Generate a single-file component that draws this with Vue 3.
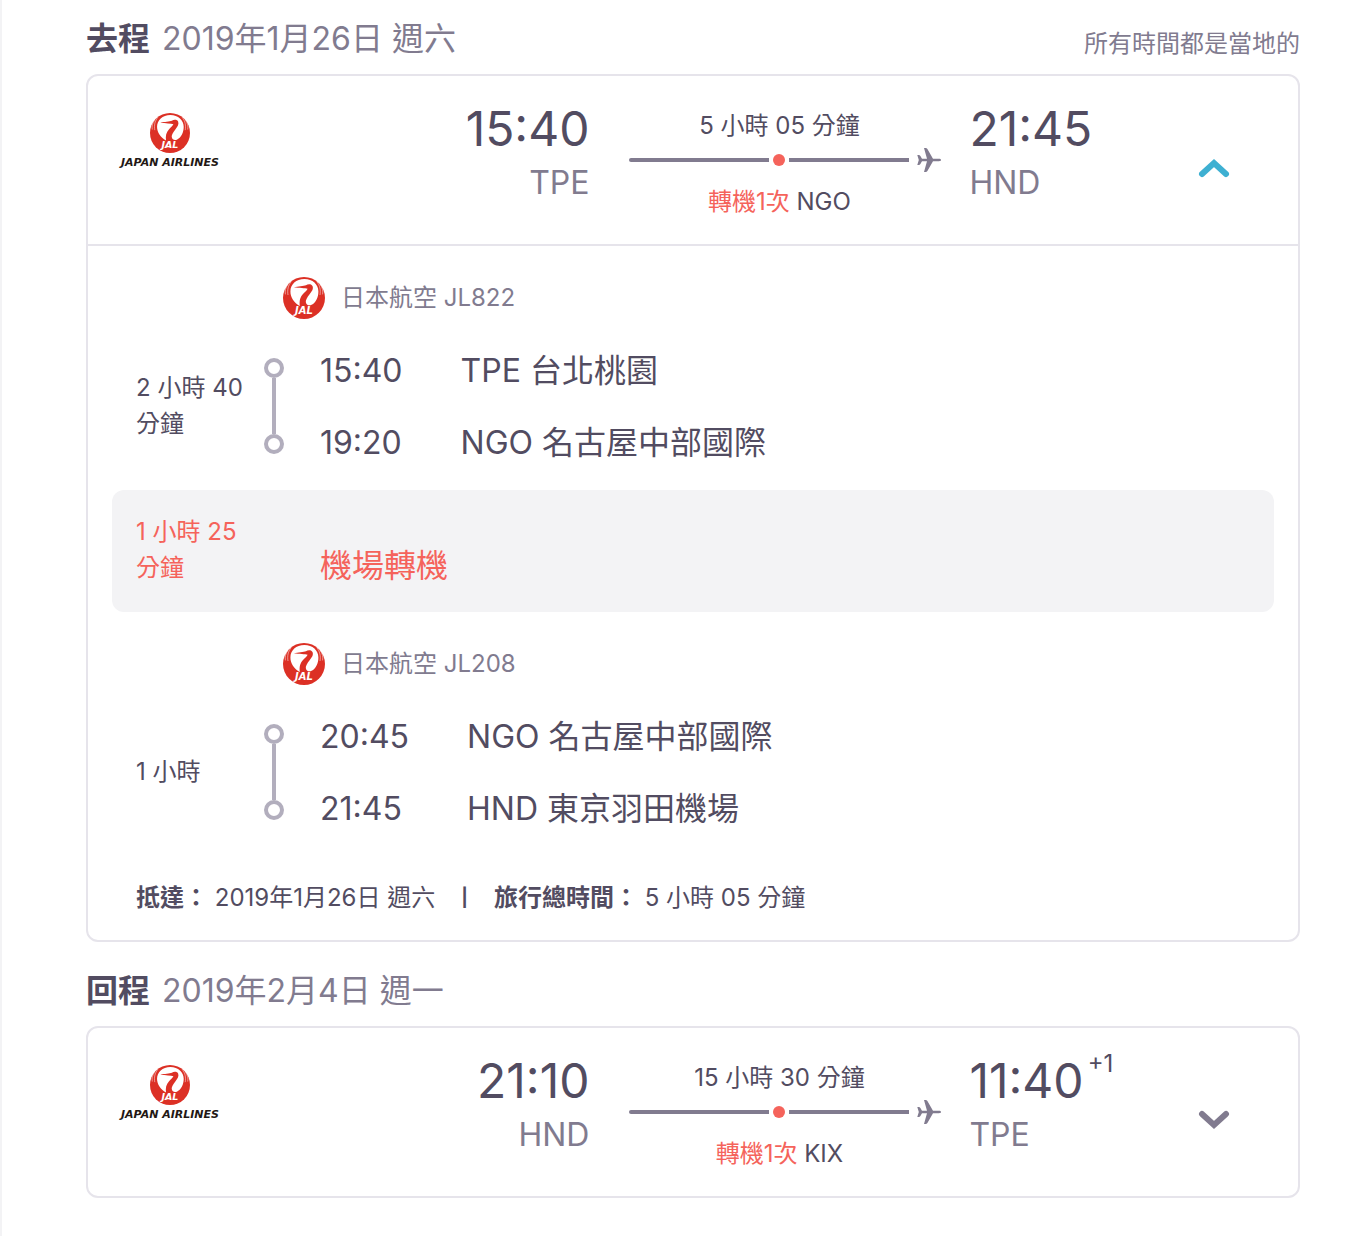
<template>
  <main class="itinerary">
    <svg class="sprite" aria-hidden="true">
      <symbol id="jal-crane" viewBox="0 0 42 42">
        <circle cx="21" cy="21" r="21" fill="#dc3025" />
        <path
          d="M21.4 2C13 2 7.4 7.4 7.4 14.4C7.4 20.4 11 25.4 16.8 29C16.2 23.8 17 20.4 20 17C22 14.8 24 13.4 24.6 11.8C22 11 16.4 10.8 10.8 10.2C15 9.2 20.6 9.2 23 8.2C25 6.6 28.8 6.8 29.6 9.2C30.6 12.2 28.6 14.6 26.6 17.2C24 20.6 22.6 23 22.8 25C23.2 28.2 26 29 28.6 27.8C32.8 25.6 35.4 20.4 35.4 14.4C35.4 7.4 29.6 2 21.4 2Z"
          fill="#fff"
        />
        <path
          d="M8.2 4.6C5 8.6 4.2 13 5 18M4.6 7.8C2.6 10.8 1.8 14 2.4 17.4M33.8 4.6C37 8.6 37.8 13 37 18M37.4 7.8C39.4 10.8 40.2 14 39.6 17.4"
          fill="none"
          stroke="#fff"
          stroke-width=".5"
        />
      </symbol>
    </svg>

    <section v-for="trip in trips" :key="trip.label" class="trip">
      <header class="trip-heading">
        <h2 class="trip-title">
          <strong>{{ trip.label }}</strong>
          <span>{{ trip.date }}</span>
        </h2>
        <p v-if="trip.note" class="trip-note">{{ trip.note }}</p>
      </header>

      <article class="card">
        <div class="summary">
          <div class="airline">
            <svg class="airline-crane" viewBox="0 0 42 42" aria-hidden="true">
              <use href="#jal-crane" />
              <text x="12" y="37" class="crane-text">JAL</text>
            </svg>
            <span class="airline-name">JAPAN AIRLINES</span>
          </div>

          <div class="endpoint departure">
            <span class="time">{{ trip.departure.time }}</span>
            <span class="code">{{ trip.departure.code }}</span>
          </div>

          <div class="route">
            <span class="route-text">{{ trip.duration }}</span>
            <div class="route-line">
              <span class="bar bar-start"></span>
              <span class="stop-dot"></span>
              <span class="bar bar-end"></span>
              <svg class="plane" viewBox="0 0 24 24" aria-hidden="true">
                <path
                  d="M24 12C24 11.2 23 10.8 22 10.8H16L10.4 1C10 .3 9.4 0 8.6 0H7L10 10.8H5L3.4 8C3 7.3 2.4 7 1.8 7H.3L1.8 12L.3 17H1.8C2.4 17 3 16.7 3.4 16L5 13.2H10L7 24H8.6C9.4 24 10 23.7 10.4 23L16 13.2H22C23 13.2 24 12.8 24 12Z"
                />
              </svg>
            </div>
            <span class="route-text"><em>轉機1次</em> {{ trip.via }}</span>
          </div>

          <div class="endpoint arrival">
            <span class="time">
              {{ trip.arrival.time }}<sup v-if="trip.arrival.plusDays">+{{ trip.arrival.plusDays }}</sup>
            </span>
            <span class="code">{{ trip.arrival.code }}</span>
          </div>

          <button
            type="button"
            class="toggle"
            :class="{ open: trip.open }"
            :aria-expanded="trip.open"
            :aria-label="trip.label"
            @click="toggleTrip(trip)"
          >
            <svg viewBox="0 0 32 20" aria-hidden="true">
              <path d="M4 4L16 15L28 4" />
            </svg>
          </button>
        </div>

        <div v-if="trip.open && trip.segments.length" class="details">
          <template v-for="segment in trip.segments" :key="segment.flight">
            <!-- Flight segment -->
            <div class="segment">
              <div class="flight">
                <svg class="flight-crane" viewBox="0 0 42 42" aria-hidden="true">
                  <use href="#jal-crane" />
                  <text x="12" y="37" class="crane-text">JAL</text>
                </svg>
                <span>{{ segment.flight }}</span>
              </div>
              <div class="segment-body">
                <span class="duration">{{ segment.duration }}</span>
                <div class="timeline">
                  <span class="ring"></span>
                  <span class="stem"></span>
                  <span class="ring"></span>
                </div>
                <div class="stops">
                  <template v-for="stop in segment.stops" :key="stop.time">
                    <span>{{ stop.time }}</span>
                    <span>{{ stop.place }}</span>
                  </template>
                </div>
              </div>
            </div>

            <!-- Transfer between two flights -->
            <div v-if="segment.transfer" class="transfer">
              <span class="duration">{{ segment.transfer }}</span>
              <span class="transfer-text">機場轉機</span>
            </div>
          </template>

          <footer class="totals">
            <span><strong>抵達：</strong> {{ trip.date }}</span>
            <strong class="divider">|</strong>
            <span><strong>旅行總時間：</strong> {{ trip.duration }}</span>
          </footer>
        </div>
      </article>
    </section>
  </main>
</template>

<script setup>
import { ref } from "vue";

const trips = ref([
  {
    label: "去程",
    date: "2019年1月26日 週六",
    note: "所有時間都是當地的",
    departure: { time: "15:40", code: "TPE" },
    arrival: { time: "21:45", code: "HND" },
    duration: "5 小時 05 分鐘",
    via: "NGO",
    open: true,
    segments: [
      {
        flight: "日本航空 JL822",
        duration: "2 小時 40 分鐘",
        stops: [
          { time: "15:40", place: "TPE 台北桃園" },
          { time: "19:20", place: "NGO 名古屋中部國際" },
        ],
        transfer: "1 小時 25 分鐘",
      },
      {
        flight: "日本航空 JL208",
        duration: "1 小時",
        stops: [
          { time: "20:45", place: "NGO 名古屋中部國際" },
          { time: "21:45", place: "HND 東京羽田機場" },
        ],
      },
    ],
  },
  {
    label: "回程",
    date: "2019年2月4日 週一",
    departure: { time: "21:10", code: "HND" },
    arrival: { time: "11:40", code: "TPE", plusDays: 1 },
    duration: "15 小時 30 分鐘",
    via: "KIX",
    open: false,
    segments: [],
  },
]);

const toggleTrip = (trip) => {
  trip.open = !trip.open;
};
</script>

<style>
body {
  background: #fff;
}
</style>

<style scoped>
.itinerary {
  min-height: 100vh;
  box-sizing: border-box;
  padding: 14px 56px 38px 84px;
  border-left: 2px solid #f3f3f5;
  font-family: Inter, "Noto Sans CJK TC", sans-serif;
  font-size: 24px;
  line-height: 36px;
  color: #524c61;
}

.sprite {
  position: absolute;
  width: 0;
  height: 0;
}

.crane-text {
  font-family: "DejaVu Sans", sans-serif;
  font-size: 10px;
  font-weight: 700;
  font-style: italic;
  fill: #fff;
}

.trip + .trip {
  margin-top: 24px;
}

.trip-heading {
  display: flex;
  justify-content: space-between;
  align-items: flex-end;
  margin-bottom: 10px;
}

.trip-title {
  display: flex;
  gap: 12px;
  margin: 0;
  font-size: 32px;
  font-weight: 400;
  line-height: 50px;
  color: #817b8f;
}

.trip-title strong {
  font-weight: 700;
  color: #524c61;
}

.trip-note {
  margin: 0;
  line-height: 40px;
  color: #817b8f;
}

.card {
  border: 2px solid #e6e4eb;
  border-radius: 12px;
}

.summary {
  display: grid;
  grid-template-columns: 98px 8fr 312px 5fr 32px;
  align-items: start;
  padding: 24px 68px 24px 33px;
}

.airline {
  display: flex;
  flex-direction: column;
  align-items: center;
  gap: 4px;
  padding-top: 13px;
}

.airline-crane {
  width: 40px;
  height: 40px;
}

.airline-name {
  font-family: "DejaVu Sans", sans-serif;
  font-size: 11px;
  font-weight: 700;
  font-style: italic;
  line-height: 12px;
  white-space: nowrap;
  color: #231815;
}

.endpoint {
  display: flex;
  flex-direction: column;
}

.departure {
  align-items: flex-end;
  padding-right: 40px;
}

.route {
  display: flex;
  flex-direction: column;
  padding-top: 8px;
}

.arrival {
  padding-left: 28px;
}

.time {
  display: flex;
  align-items: flex-start;
  font-size: 48px;
  line-height: 58px;
}

.time sup {
  margin-left: 4px;
  font-size: 24px;
  line-height: 24px;
}

.code {
  font-size: 32px;
  line-height: 50px;
  color: #817b8f;
}

.route-text {
  padding-right: 12px;
  text-align: center;
}

.route-text em {
  font-style: normal;
  color: #f5635b;
}

.route-line {
  display: flex;
  align-items: center;
  margin: 4px 0 12px;
}

.bar {
  height: 4px;
  background: #817b8f;
}

.bar-start {
  flex: 7;
  border-radius: 2px 0 0 2px;
}

.bar-end {
  flex: 6;
}

.stop-dot {
  width: 12px;
  height: 12px;
  margin: 0 4px;
  border-radius: 50%;
  background: #f5635b;
}

.plane {
  width: 24px;
  height: 24px;
  margin-left: 8px;
  fill: #817b8f;
}

.toggle {
  display: flex;
  margin-top: 58px;
  padding: 0;
  border: 0;
  background: none;
  color: #817b8f;
  cursor: pointer;
}

.toggle svg {
  width: 32px;
  height: 20px;
  fill: none;
  stroke: currentColor;
  stroke-width: 6;
  stroke-linecap: round;
}

.toggle.open {
  color: #3eb0d2;
}

.toggle.open svg {
  transform: rotate(180deg);
}

.details {
  padding: 0 24px 24px;
  border-top: 2px solid #e6e4eb;
}

.segment {
  padding: 30px 24px 24px;
}

.flight {
  display: flex;
  align-items: center;
  gap: 16px;
  height: 44px;
  margin: 0 0 26px 147px;
  color: #817b8f;
}

.flight-crane {
  width: 42px;
  height: 42px;
}

.segment-body {
  display: flex;
  align-items: center;
  height: 120px;
}

.duration {
  width: 112px;
}

.timeline {
  display: flex;
  flex-direction: column;
  align-items: center;
  margin: 0 36px 0 16px;
}

.ring {
  box-sizing: border-box;
  width: 20px;
  height: 20px;
  border: 4px solid #b2aebd;
  border-radius: 50%;
}

.stem {
  width: 4px;
  height: 56px;
  background: #b2aebd;
}

.stops {
  display: grid;
  grid-template-columns: auto auto;
  gap: 24px 58px;
  padding-top: 2px;
  font-size: 32px;
  line-height: 48px;
}

.transfer {
  display: flex;
  align-items: flex-end;
  gap: 72px;
  padding: 24px 24px 26px;
  border-radius: 12px;
  background: #f3f3f5;
  color: #f5635b;
}

.transfer-text {
  font-size: 32px;
  line-height: 40px;
}

.totals {
  display: flex;
  flex-wrap: wrap;
  gap: 26px;
  padding: 24px 24px 0;
}

.totals strong {
  font-weight: 700;
}

.totals .divider {
  font-size: 18px;
}
</style>
